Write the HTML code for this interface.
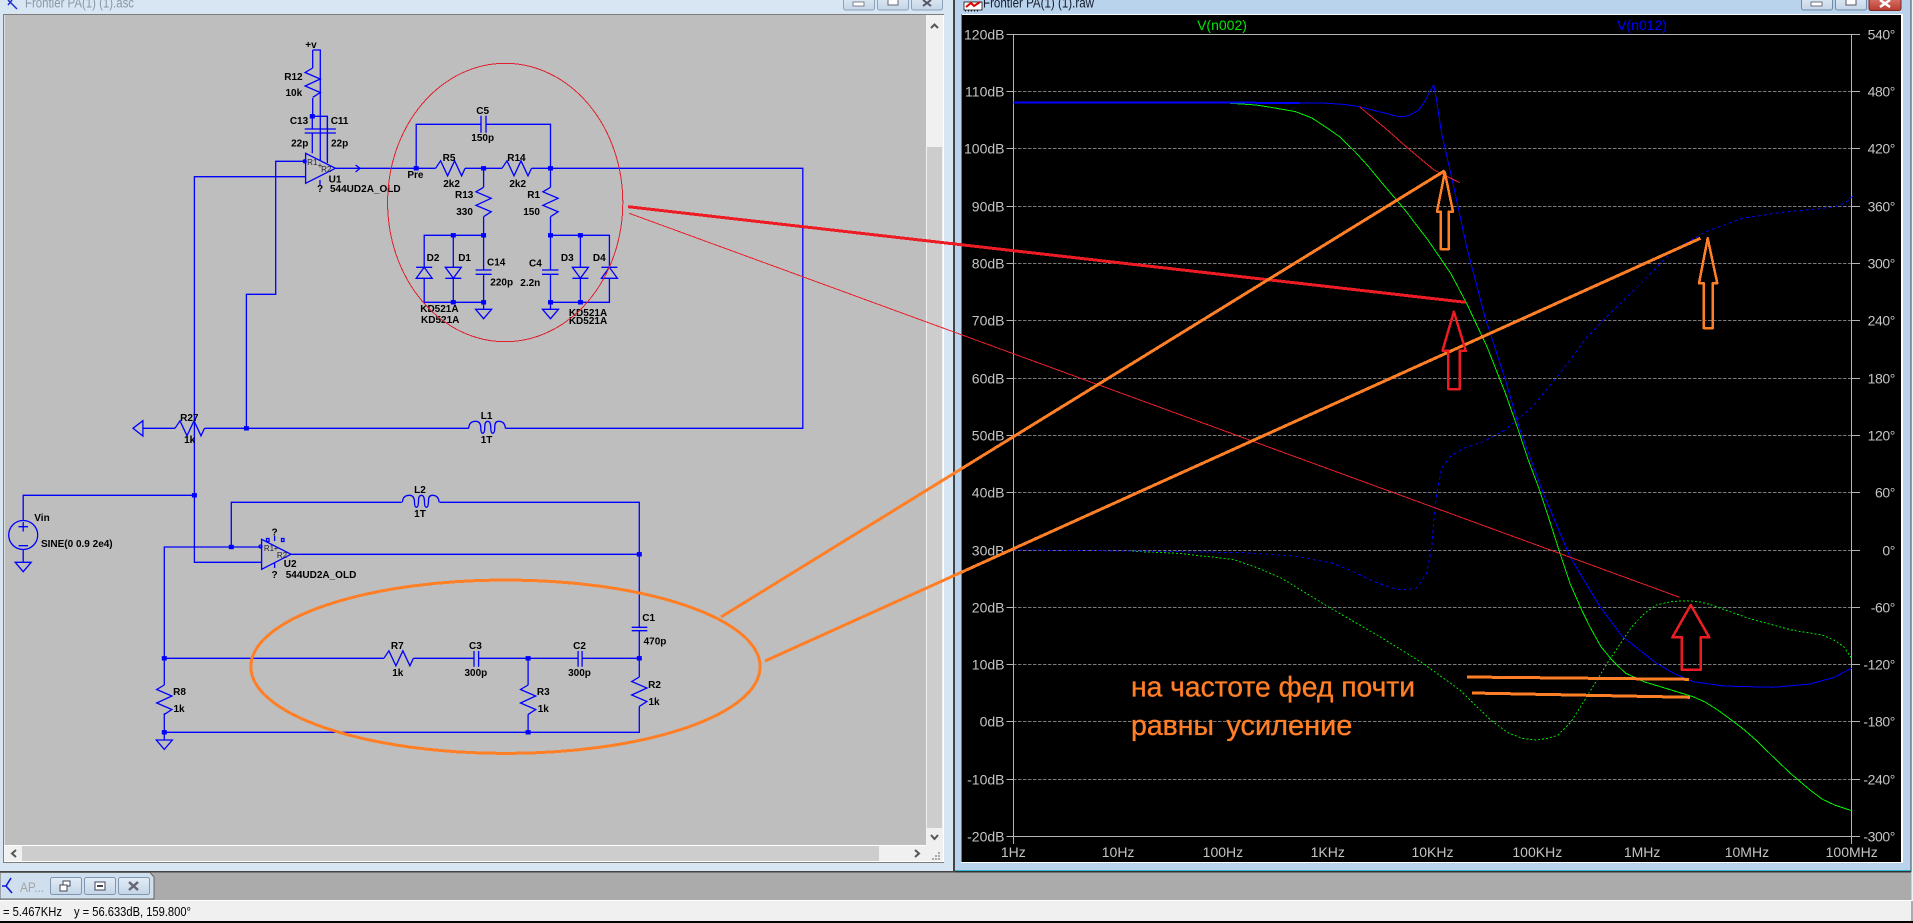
<!DOCTYPE html>
<html><head><meta charset="utf-8"><title>LTspice</title>
<style>
html,body{margin:0;padding:0;background:#ababab;overflow:hidden}
svg{display:block}
.s text{font:bold 10px "Liberation Sans",sans-serif;fill:#000;text-anchor:middle}
.w{fill:none;stroke:#0000ff;stroke-width:1.3}
.l text{font:14px "Liberation Sans",sans-serif;fill:#c4c4c4;text-anchor:end}
.r text{font:14px "Liberation Sans",sans-serif;fill:#c4c4c4;text-anchor:end;letter-spacing:-.4px}
.b text{font:14px "Liberation Sans",sans-serif;fill:#c4c4c4;text-anchor:middle}
.g line{stroke:#7a7a7a;stroke-width:1;stroke-dasharray:3.500 1.500}
</style></head>
<body>
<svg width="1913" height="923" viewBox="0 0 1913 923" xmlns="http://www.w3.org/2000/svg">
<defs>
<polyline id="rv" class="w" points="0,0 -7.6,4.5 7.6,11 -7.6,18 7.6,24.5 0,29.4"/>
<polyline id="rh" class="w" points="0,0 5,-7.5 12,7.5 19,-7.5 26,7.5 29.5,0"/>
<path id="gnd" class="w" d="M-8 0H8L0 9.4Z"/>
<path id="coil" class="w" d="M0 0Q0-7 7-7Q12-7 12 0Q12 5 14 5Q16 5 16-2Q16-7 19-7Q22-7 22 0Q22 5 24 5Q26 5 26-2Q26-7 30-7Q36-7 36.6 0"/>
<path id="dup" class="w" d="M-8 0H8M0 0L-8 11H8Z"/>
<path id="ddn" class="w" d="M-8 11H8M0 11L-8 0H8Z"/>
<rect id="j" x="-2.5" y="-2.2" width="5" height="4.4" fill="#0000ff"/>
<g id="dec">
<line x1="31.5" y1="34" x2="31.5" y2="836"/><line x1="50" y1="34" x2="50" y2="836"/><line x1="63.1" y1="34" x2="63.1" y2="836"/><line x1="73.2" y1="34" x2="73.2" y2="836"/><line x1="81.5" y1="34" x2="81.5" y2="836"/><line x1="88.6" y1="34" x2="88.6" y2="836"/><line x1="94.6" y1="34" x2="94.6" y2="836"/><line x1="100" y1="34" x2="100" y2="836"/><line x1="104.8" y1="34" x2="104.8" y2="836"/>
</g>
<linearGradient id="bt" x1="0" y1="0" x2="0" y2="1"><stop offset="0" stop-color="#e2ecf6"/><stop offset="1" stop-color="#c4d5e6"/></linearGradient>
<linearGradient id="cl" x1="0" y1="0" x2="0" y2="1"><stop offset="0" stop-color="#e0857a"/><stop offset="1" stop-color="#b83a2e"/></linearGradient>
</defs>

<!-- background -->
<rect width="1913" height="923" fill="#ababab"/>

<!-- left window frame -->
<rect x="0" y="0" width="953" height="871" fill="#d8e5f3"/>
<rect x="953" y="0" width="2" height="872" fill="#444"/>
<rect x="0" y="871" width="955" height="1.5" fill="#444"/>
<rect x="3" y="14" width="941" height="849" fill="#7d7d7d"/>
<rect x="4" y="15" width="940" height="847" fill="#fff"/>
<rect x="4.5" y="15" width="921.5" height="830" fill="#bebebe"/>
<!-- scrollbars -->
<rect x="926" y="15" width="17" height="846" fill="#f0f0f0"/>
<rect x="927" y="147" width="15" height="681" fill="#cdcdcd"/>
<rect x="4.5" y="846" width="938" height="15" fill="#f0f0f0"/>
<rect x="22" y="846" width="857" height="15" fill="#cdcdcd"/>
<g fill="none" stroke="#555" stroke-width="2">
<path d="M931 28L934.500 24.500L938 28"/>
<path d="M931 835L934.500 839L938 835"/>
<path d="M16 850L12 853.500L16 857"/>
<path d="M915 850L919 853.500L915 857"/>
</g>
<g fill="#aaa"><rect x="938" y="852" width="2" height="2"/><rect x="935" y="855" width="2" height="2"/><rect x="938" y="855" width="2" height="2"/><rect x="932" y="858" width="2" height="2"/><rect x="935" y="858" width="2" height="2"/><rect x="938" y="858" width="2" height="2"/></g>

<!-- left title bar -->
<path d="M8 0L13 5L17 9M8 5L12 0" stroke="#1a2fd0" stroke-width="1.5" fill="none"/>
<text x="25" y="7.500" font-family="Liberation Sans, sans-serif" font-size="14" fill="#8a97a6" textLength="109" lengthAdjust="spacingAndGlyphs">Frontier PA(1) (1).asc</text>
<g stroke="#8aa2bb" fill="url(#bt)"><rect x="843.500" y="-5" width="31" height="15" rx="2"/><rect x="877.500" y="-5" width="31" height="15" rx="2"/><rect x="911.500" y="-5" width="31" height="15" rx="2"/></g>
<rect x="853" y="2" width="11" height="4" fill="#fff" stroke="#667" stroke-width=".8"/>
<rect x="888" y="-2" width="10" height="7" fill="#fff" stroke="#667"/>
<path d="M923 0L931 6M931 0L923 6" stroke="#556" stroke-width="2"/>

<!-- schematic wires -->
<g class="w">
<path d="M312.700 50H320.300V161M312.700 50V68M312.700 98V116.300H327.400V163"/>
<path d="M312.300 116.300V129M312.300 133V153.300M327.400 116.300V129M327.400 133V160"/>
<path d="M304.700 129H320.700M304.700 133H320.700M320.700 129H335.900M320.700 133H335.900"/>
<path d="M305.600 153.300V183.300L335.400 168.300Z"/>
<path d="M305.600 161.300H275.700V294.300H246.400V428.300"/>
<path d="M305.600 176.700H194.400V562.300H261.600"/>
<path d="M320 180V186"/>
<path d="M335.400 168.300H435.600M465 168.300H502M531.600 168.300H802.800V428.300H505.400M468.800 428.300H204.500M175 428.300H142.900"/>
<path d="M355.600 165L360 168.300L355.600 172"/>
<path d="M142.900 420.700V436L133 428.300Z"/>
<path d="M416.200 168.300V124.300H481M486 124.300H550.500V187.300M550.500 216.700V235.300"/>
<path d="M481 115.700V132.700M486 115.700V132.700"/>
<path d="M483.600 168.300V187.300M483.600 216.700V270M483.600 274.300V302.300M483.600 302.300V309.300"/>
<path d="M550.500 235.300V270M550.500 274.300V309.300"/>
<path d="M424.200 267.300V235.300H483.600M424.200 278.300V302.300H483.600M453.300 235.300V267.300M453.300 278.300V302.300"/>
<path d="M550.500 235.300H609.400V267.300M609.400 278.300V302.300H550.500M580.400 235.300V267.300M580.400 278.300V302.300"/>
<path d="M475.600 270H491.600M475.600 274.300H491.600M542 270H558.500M542 274.300H558.500"/>
<!-- lower part -->
<path d="M194.400 495.300H23.200V520.500M23.200 549.500V562.300"/>
<path d="M231.300 547V502.300H401.800M439.700 502.300H639.300V627.300M639.300 630.700V677M639.300 706.400V732.300H164.300V713.300M164.300 685V547H261.600"/>
<path d="M631.700 627.300H647.300M631.700 630.700H647.300"/>
<path d="M261.600 539.300V569.300L291 554.300ZM291 554.300H639.300"/>
<path d="M164.300 658.300H383.900M413.400 658.300H474M478.600 658.300H578.100M582.100 658.300H639.300"/>
<path d="M474 651V666.700M478.600 651V666.700M578.100 651V666.700M582.100 651V666.700"/>
<path d="M528.100 658.300V685M528.100 714.400V732.300"/>
<path d="M274.600 536V541M274.600 563V568"/>
</g>
<circle cx="23.200" cy="535" r="14.500" class="w"/>
<path d="M18.500 526.700H28M23.200 522V531.500M18.500 545.700H28" class="w"/>
<circle cx="304.700" cy="161.300" r="1.500" class="w"/>
<circle cx="260.500" cy="546.500" r="1.500" class="w"/>
<rect x="266.500" y="538.500" width="2.500" height="3" class="w" stroke-width=".8"/>
<rect x="281.500" y="538.500" width="2.500" height="3" class="w" stroke-width=".8"/>

<use href="#rv" x="312.700" y="68"/>
<use href="#rv" x="483.600" y="187.300"/>
<use href="#rv" x="550.500" y="187.300"/>
<use href="#rv" x="164.300" y="685"/>
<use href="#rv" x="528.100" y="685"/>
<use href="#rv" x="639.300" y="677"/>
<use href="#rh" x="435.600" y="168.300"/>
<use href="#rh" x="502" y="168.300"/>
<use href="#rh" x="175" y="428.300"/>
<use href="#rh" x="383.900" y="658.300"/>
<use href="#coil" x="468.800" y="428.300"/>
<use href="#coil" x="402.500" y="502.300"/>
<use href="#gnd" x="483.600" y="309.300"/>
<use href="#gnd" x="550.500" y="309.300"/>
<use href="#gnd" x="23.200" y="562.300"/>
<use href="#gnd" x="164.300" y="740"/>
<path d="M164.300 732V740" class="w"/>
<use href="#dup" x="424.200" y="267.300"/>
<use href="#ddn" x="453.300" y="267.300"/>
<use href="#ddn" x="580.400" y="267.300"/>
<use href="#dup" x="609.400" y="267.300"/>

<use href="#j" x="312.300" y="116.300"/><use href="#j" x="416.200" y="168.300"/><use href="#j" x="483.600" y="168.300"/><use href="#j" x="550.500" y="168.300"/>
<use href="#j" x="453.300" y="235.300"/><use href="#j" x="483.600" y="235.300"/><use href="#j" x="550.500" y="235.300"/><use href="#j" x="580.400" y="235.300"/>
<use href="#j" x="453.300" y="302.300"/><use href="#j" x="483.600" y="302.300"/><use href="#j" x="550.500" y="302.300"/><use href="#j" x="580.400" y="302.300"/>
<use href="#j" x="246.400" y="428.300"/><use href="#j" x="194.400" y="495.300"/><use href="#j" x="231.300" y="547"/><use href="#j" x="639.300" y="554.300"/>
<use href="#j" x="164.300" y="658.300"/><use href="#j" x="528.100" y="658.300"/><use href="#j" x="639.300" y="658.300"/><use href="#j" x="164.300" y="732.300"/><use href="#j" x="528.100" y="732.300"/>

<!-- schematic text -->
<g class="s">
<text x="311" y="48">+v</text>
<text x="293.400" y="80">R12</text><text x="293.800" y="96">10k</text>
<text x="299" y="124">C13</text><text x="339.600" y="124">C11</text>
<text x="299.700" y="146.500">22p</text><text x="339.600" y="146.500">22p</text>
<text x="482.700" y="114">C5</text><text x="482.700" y="141">150p</text>
<text x="449" y="161">R5</text><text x="516.400" y="161">R14</text>
<text x="415.400" y="178">Pre</text>
<text x="451.600" y="187">2k2</text><text x="517.700" y="187">2k2</text>
<text x="464.200" y="198">R13</text><text x="464.600" y="215">330</text>
<text x="533.700" y="198">R1</text><text x="531.600" y="215">150</text>
<text x="433" y="261">D2</text><text x="464.600" y="261">D1</text>
<text x="496.200" y="265.500">C14</text><text x="501.700" y="285.500">220p</text>
<text x="535.400" y="266.500">C4</text><text x="530.300" y="286">2.2n</text>
<text x="567.300" y="261">D3</text><text x="599.300" y="261">D4</text>
<text x="439.400" y="312">KD521A</text><text x="440.200" y="323">KD521A</text>
<text x="588" y="316">KD521A</text><text x="588" y="324">KD521A</text>
<text x="335" y="182.500">U1</text><text x="365.300" y="192">544UD2A_OLD</text><text x="320" y="192">?</text>
<text x="189.300" y="421">R27</text><text x="189.700" y="443">1k</text>
<text x="486.600" y="419">L1</text><text x="486.600" y="443">1T</text>
<text x="42" y="521">Vin</text><text x="76.800" y="547">SINE(0 0.9 2e4)</text>
<text x="420" y="493">L2</text><text x="420" y="517">1T</text>
<text x="290.200" y="567">U2</text><text x="321" y="578">544UD2A_OLD</text>
<text x="274.600" y="535.500">?</text><text x="274.600" y="578">?</text>
<text x="648.700" y="621">C1</text><text x="655" y="644.500">470p</text>
<text x="397.300" y="649">R7</text><text x="397.800" y="676">1k</text>
<text x="475.400" y="649">C3</text><text x="475.900" y="676">300p</text>
<text x="579.500" y="649">C2</text><text x="579.500" y="676">300p</text>
<text x="179.500" y="695">R8</text><text x="179" y="712">1k</text>
<text x="543.300" y="695">R3</text><text x="543.300" y="712">1k</text>
<text x="654.500" y="688">R2</text><text x="654" y="705">1k</text>
</g>
<g font-family="Liberation Sans, sans-serif" font-size="8" fill="#223" text-anchor="middle">
<text x="312.300" y="165">R1</text><text x="326.200" y="172">R2</text><text x="320" y="168">+</text>
<text x="269" y="551">R1</text><text x="282" y="558">R2</text><text x="276" y="551">+</text>
</g>

<!-- right window frame -->
<rect x="955" y="0" width="956" height="871" fill="#b9d3ec"/>
<rect x="955" y="870" width="956" height="1" fill="#30b8d0"/>
<rect x="955" y="871" width="956" height="1.500" fill="#333"/>
<rect x="1910.500" y="0" width="1" height="872" fill="#445"/>
<rect x="1911.500" y="0" width="1.500" height="900" fill="#eef2f6"/>
<rect x="961" y="14" width="942" height="849" fill="#fff"/>
<rect x="961" y="14" width="1" height="848" fill="#777"/>
<rect x="962" y="15" width="939" height="847" fill="#000"/>
<!-- right title bar -->
<rect x="964" y="2" width="18" height="8" fill="#fff" stroke="#111" stroke-width=".8"/>
<path d="M966 7L971 3L974 6L980 2" stroke="#e00000" stroke-width="2" fill="none"/>
<path d="M965 11h1M968 11h1M971 11h1M974 11h1M977 11h1" stroke="#000"/>
<text x="983" y="7.500" font-family="Liberation Sans, sans-serif" font-size="14" fill="#111a2a" textLength="111" lengthAdjust="spacingAndGlyphs">Frontier PA(1) (1).raw</text>
<g stroke="#6d8aa8" fill="url(#bt)"><rect x="1801.500" y="-5" width="31" height="15" rx="2"/><rect x="1835.500" y="-5" width="31" height="15" rx="2"/></g>
<rect x="1869" y="-5" width="32" height="15.500" rx="2" fill="url(#cl)" stroke="#7a2a28"/>
<rect x="1811" y="2" width="11" height="4" fill="#fff" stroke="#556" stroke-width=".8"/>
<rect x="1846" y="-2" width="10" height="7" fill="#fff" stroke="#556"/>
<path d="M1880 0L1890 7M1890 0L1880 7" stroke="#fff" stroke-width="2.500"/>

<!-- plot grid -->
<g class="g" shape-rendering="crispEdges">
<use href="#dec" x="1013"/><use href="#dec" x="1117.800"/><use href="#dec" x="1222.600"/><use href="#dec" x="1327.400"/>
<use href="#dec" x="1432.200"/><use href="#dec" x="1537"/><use href="#dec" x="1641.800"/><use href="#dec" x="1746.600"/>
<line x1="1013" y1="91.500" x2="1852" y2="91.500"/><line x1="1013" y1="148.500" x2="1852" y2="148.500"/><line x1="1013" y1="206.500" x2="1852" y2="206.500"/><line x1="1013" y1="263.500" x2="1852" y2="263.500"/><line x1="1013" y1="320.500" x2="1852" y2="320.500"/><line x1="1013" y1="378.500" x2="1852" y2="378.500"/><line x1="1013" y1="435.500" x2="1852" y2="435.500"/><line x1="1013" y1="492.500" x2="1852" y2="492.500"/><line x1="1013" y1="550.500" x2="1852" y2="550.500"/><line x1="1013" y1="607.500" x2="1852" y2="607.500"/><line x1="1013" y1="664.500" x2="1852" y2="664.500"/><line x1="1013" y1="721.500" x2="1852" y2="721.500"/><line x1="1013" y1="779.500" x2="1852" y2="779.500"/>
</g>
<g stroke="#b4b4b4" stroke-width="1" shape-rendering="crispEdges">
<path d="M1006.500 34.500H1860M1006.500 836.500H1860M1013.500 34V844M1851.500 34V844" fill="none"/>
<path d="M1006.500 91.500H1013M1006.500 148.500H1013M1006.500 206.500H1013M1006.500 263.500H1013M1006.500 320.500H1013M1006.500 378.500H1013M1006.500 435.500H1013M1006.500 492.500H1013M1006.500 550.500H1013M1006.500 607.500H1013M1006.500 664.500H1013M1006.500 721.500H1013M1006.500 779.500H1013" fill="none"/>
<path d="M1852 91.500H1860M1852 148.500H1860M1852 206.500H1860M1852 263.500H1860M1852 320.500H1860M1852 378.500H1860M1852 435.500H1860M1852 492.500H1860M1852 550.500H1860M1852 607.500H1860M1852 664.500H1860M1852 721.500H1860M1852 779.500H1860" fill="none"/>
</g>

<!-- axis labels -->
<g class="l">
<text x="1004.500" y="39.500">120dB</text><text x="1004.500" y="96.500">110dB</text><text x="1004.500" y="153.500">100dB</text><text x="1004.500" y="211.500">90dB</text><text x="1004.500" y="268.500">80dB</text><text x="1004.500" y="325.500">70dB</text><text x="1004.500" y="383.500">60dB</text><text x="1004.500" y="440.500">50dB</text><text x="1004.500" y="497.500">40dB</text><text x="1004.500" y="555.500">30dB</text><text x="1004.500" y="612.500">20dB</text><text x="1004.500" y="669.500">10dB</text><text x="1004.500" y="726.500">0dB</text><text x="1004.500" y="784.500">-10dB</text><text x="1004.500" y="841.500">-20dB</text>
</g>
<g class="r">
<text x="1895" y="39.500">540°</text><text x="1895" y="96.500">480°</text><text x="1895" y="153.500">420°</text><text x="1895" y="211.500">360°</text><text x="1895" y="268.500">300°</text><text x="1895" y="325.500">240°</text><text x="1895" y="383.500">180°</text><text x="1895" y="440.500">120°</text><text x="1895" y="497.500">60°</text><text x="1895" y="555.500">0°</text><text x="1895" y="612.500">-60°</text><text x="1895" y="669.500">-120°</text><text x="1895" y="726.500">-180°</text><text x="1895" y="784.500">-240°</text><text x="1895" y="841.500">-300°</text>
</g>
<g class="b">
<text x="1013.300" y="857">1Hz</text><text x="1118.100" y="857">10Hz</text><text x="1222.900" y="857">100Hz</text><text x="1327.700" y="857">1KHz</text><text x="1432.500" y="857">10KHz</text><text x="1537.300" y="857">100KHz</text><text x="1642.100" y="857">1MHz</text><text x="1746.900" y="857">10MHz</text><text x="1851.700" y="857">100MHz</text>
</g>
<text x="1222" y="30" font-family="Liberation Sans, sans-serif" font-size="14" fill="#00e800" text-anchor="middle">V(n002)</text>
<text x="1642" y="30" font-family="Liberation Sans, sans-serif" font-size="14" fill="#0000ff" text-anchor="middle">V(n012)</text>

<!-- curves -->
<g fill="none" stroke-linejoin="round" shape-rendering="crispEdges">
<polyline stroke="#00e000" stroke-width="1" stroke-dasharray="2 2" points="1128,551 1177.300,553.300 1232.600,559.300 1258,568 1281.700,578.300 1330.800,608.300 1380,636.700 1423,663.300 1459.800,690 1490.500,720 1509,733.300 1523,738.500 1536.600,740 1548,738.500 1558,735 1571,722 1582.700,703.300 1607.200,663.300 1631.800,626.700 1645,613 1656.400,605 1672,601.500 1687,600.700 1700,602 1711.700,605 1748.500,618.300 1791.500,630 1822.200,635 1834,640 1843.700,646.700 1851.700,658.300"/>
<polyline stroke="#0000ff" stroke-width="1" stroke-dasharray="3 3" points="1013.300,550 1134.300,551 1244.800,552.700 1294,556 1330.800,562.700 1352,571 1373.800,581.700 1392,588 1401.700,590 1416.700,588 1426.700,573.300 1431.700,546.700 1434,516.700 1436.700,493.300 1441.700,468.300 1450,456.700 1463.300,448.300 1483.300,441.700 1505,430 1532.700,406.700 1560,373.300 1587.400,336.700 1610.200,313.300 1637.600,286.700 1674,250 1706,231.700 1742.400,218.300 1778.900,212.700 1833.500,207.300 1845,203 1854,195"/>
<polyline stroke="#00f000" stroke-width="1" points="1221.700,102.700 1256,105 1272,107.500 1295.700,111.700 1312,118 1327.600,128.300 1340,137 1355,151.700 1368,166 1382.300,183.300 1405,210 1427.900,240 1450.700,273.300 1466.600,303.300 1487,346.700 1505.400,393.300 1518.300,430 1528.300,460 1538.300,486.700 1548.300,516.700 1560,553.300 1570,583.300 1581.700,610 1590,627 1601,646.700 1612,660 1625.700,673.300 1644,681.700 1668,689 1693,696.700 1705,702 1717.800,710 1730,719 1742.400,728.300 1757,741 1773,756.700 1790,773 1810,790 1822,799 1834.500,805 1851.700,810.700"/>
<polyline stroke="#0000ff" stroke-width="2" points="1013.500,102.500 1300,102.800"/>
<polyline stroke="#0000ff" stroke-width="1" points="1300,102.800 1327.600,103.300 1345,104.500 1359.500,106.700 1382,112.500 1398,116.500 1403,116.700 1410,115 1418.800,110 1425,101 1430,91 1433.800,85 1436.500,100 1441.600,133.300 1453,183.300 1466.600,246.700 1484.900,316.700 1505.400,380 1520,430 1543.300,493.300 1570,556.700 1600,606.700 1622.600,636.700 1656.400,663.300 1675,674 1693.200,681.700 1724,686 1773,687.300 1810,684 1834.500,677.300 1844,672 1851.700,668.300"/>
<polyline stroke="#e8202c" stroke-width="1" points="1359.500,106.700 1385,128 1410,150 1434,170 1459.800,182.700"/>
<line x1="629.200" y1="213.300" x2="1679.700" y2="597.300" stroke="#e8202c" stroke-width="1"/>
<ellipse cx="505.200" cy="202.500" rx="117.600" ry="139.200" stroke="#e0202c" stroke-width="1"/>
<line x1="628" y1="206.700" x2="1465.700" y2="302.300" stroke="#ed1c24" stroke-width="3"/>
<ellipse cx="505.500" cy="666.700" rx="254.600" ry="86.700" stroke="#ff7f27" stroke-width="3"/>
<line x1="721" y1="617" x2="1444.800" y2="170.700" stroke="#ff7f27" stroke-width="3"/>
<line x1="765" y1="661" x2="1700.400" y2="238.300" stroke="#ff7f27" stroke-width="3"/>
<polygon points="1444.800,172.300 1453,211.700 1448.900,211.700 1448.900,249 1440.700,249 1440.700,211.700 1437,211.700" stroke="#ff7f27" stroke-width="2.500"/>
<polygon points="1707.700,238.300 1717.300,283.300 1712.800,283.300 1712.800,328 1703.600,328 1703.600,283.300 1699,283.300" stroke="#ff7f27" stroke-width="2.500"/>
<polygon points="1453.900,311.700 1465.700,350.700 1459.800,350.700 1459.800,389 1448.400,389 1448.400,350.700 1442.500,350.700" stroke="#ed1c24" stroke-width="2.500"/>
<polygon points="1690.800,605 1709.200,637.300 1700.600,637.300 1700.600,669.700 1681.600,669.700 1681.600,637.300 1672.400,637.300" stroke="#ed1c24" stroke-width="2.500"/>
<line x1="1467.200" y1="677" x2="1689" y2="679.300" stroke="#ff7f27" stroke-width="3"/>
<line x1="1472" y1="693" x2="1690" y2="697.300" stroke="#ff7f27" stroke-width="3"/>
</g>
<g font-family="Liberation Sans, sans-serif" font-size="29" fill="#ff7f27" stroke="#ff7f27" stroke-width=".35">
<text x="1131" y="696.700" textLength="284" lengthAdjust="spacingAndGlyphs">на частоте фед почти</text>
<text x="1131" y="735" textLength="83" lengthAdjust="spacingAndGlyphs">равны</text>
<text x="1226.400" y="735" textLength="126" lengthAdjust="spacingAndGlyphs">усиление</text>
</g>

<!-- minimized tab -->
<path d="M0 872.500H150L154 877V899H0Z" fill="#d0dfee" stroke="#666" stroke-width="1"/>
<path d="M11 878L6 886L12 893M2 886H6" stroke="#1018d8" stroke-width="1.600" fill="none"/>
<text x="20" y="892" font-family="Liberation Sans, sans-serif" font-size="14" fill="#a4a4a4" textLength="24" lengthAdjust="spacingAndGlyphs">AP...</text>
<g stroke="#7f97b0" fill="url(#bt)"><rect x="50.500" y="877.500" width="31" height="17" rx="2"/><rect x="84.500" y="877.500" width="31" height="17" rx="2"/><rect x="118.500" y="877.500" width="31" height="17" rx="2"/></g>
<g fill="#fff" stroke="#445"><rect x="63" y="881" width="7" height="5"/><rect x="60" y="885" width="7" height="6"/><rect x="95" y="882" width="10" height="8"/></g>
<rect x="97" y="885" width="6" height="2" fill="#445"/>
<path d="M129 882L138 890M138 882L129 890" stroke="#667" stroke-width="2.500"/>

<!-- status bar -->
<rect x="0" y="900" width="1913" height="1" fill="#fff"/>
<rect x="0" y="901" width="1911" height="20" fill="#f0f0f0"/>
<rect x="0" y="921" width="1913" height="2" fill="#000"/>
<text x="3" y="916" font-family="Liberation Sans, sans-serif" font-size="13" fill="#000" textLength="59" lengthAdjust="spacingAndGlyphs">= 5.467KHz</text>
<text x="74" y="916" font-family="Liberation Sans, sans-serif" font-size="13" fill="#000" textLength="117" lengthAdjust="spacingAndGlyphs">y = 56.633dB, 159.800°</text>
</svg>
</body></html>
